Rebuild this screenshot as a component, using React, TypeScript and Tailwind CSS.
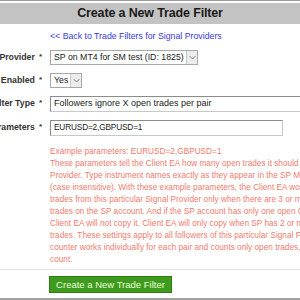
const helpLines = [
  "Example parameters: EURUSD=2,GBPUSD=1",
  "These parameters tell the Client EA how many open trades it should see before copying from the Signal",
  "Provider. Type instrument names exactly as they appear in the SP MetaTrader Market Watch window",
  "(case insensitive). With these example parameters, the Client EA would copy EURUSD",
  "trades from this particular Signal Provider only when there are 3 or more open EURUSD",
  "trades on the SP account. And if the SP account has only one open GBPUSD trade, the",
  "Client EA will not copy it. Client EA will only copy when SP has 2 or more open GBPUSD",
  "trades. These settings apply to all followers of this particular Signal Provider. The",
  "counter works individually for each pair and counts only open trades, pending orders don't",
  "count.",
];

const Label = ({ text }: { text: string }) => (
  <div className="w-[100px] shrink-0 text-right whitespace-nowrap text-[8.75px] font-bold text-[#333]">
    {text}
    <span className="ml-[4px] text-[8px] align-[1px]">*</span>
  </div>
);

const Chevron = () => (
  <span className="flex h-full w-[11px] items-center justify-center border-l border-[#c8c8c8] bg-[#ececec]">
    <svg width="7" height="5" viewBox="0 0 7 5" fill="none">
      <path d="M0.5 1 L3.5 4 L6.5 1" stroke="#888" strokeWidth="1" />
    </svg>
  </span>
);

export default function App() {
  return (
    <div className="relative flex h-[300px] w-[300px] flex-col overflow-hidden bg-white font-['Liberation_Sans',Arial,sans-serif] text-[#222]">
      <div className="h-px shrink-0 bg-[#9a9a9a]" />
      <div className="mt-[2px] flex h-[21px] shrink-0 items-center justify-center bg-[#c3c3c3] text-[12.5px] font-bold tracking-[-0.15px] text-[#1a1a1a]">
        Create a New Trade Filter
      </div>

      <div className="ml-[-58px] w-[420px] shrink-0">
        <div className="ml-[108px] mt-[5px] h-[14px] text-[8.75px] leading-[14px] text-[#3b3bd6]">
          &lt;&lt; Back to Trade Filters for Signal Providers
        </div>

        <div className="mt-[7px] flex flex-col gap-[8px]">
          <div className="flex h-[15px] items-center gap-[8px]">
            <Label text="Provider" />
            <div className="flex h-[15px] w-[148px] items-center border border-[#a8a8a8] bg-white">
              <span className="flex-1 whitespace-nowrap pl-[3px] text-[8.75px] leading-none">SP on MT4 for SM test (ID: 1825)</span>
              <Chevron />
            </div>
          </div>

          <div className="flex h-[15px] items-center gap-[8px]">
            <Label text="Enabled" />
            <div className="flex h-[15px] w-[32px] items-center border border-[#a8a8a8] bg-white">
              <span className="flex-1 pl-[3px] text-[8.75px] leading-none">Yes</span>
              <Chevron />
            </div>
          </div>

          <div className="flex h-[16px] items-center gap-[8px]">
            <Label text="Filter Type" />
            <div className="flex h-[16px] w-[300px] items-center border border-[#8c8c8c] border-b-[#c8c8c8] border-r-[#c8c8c8] bg-white pl-[3px] text-[9px] whitespace-nowrap">
              Followers ignore X open trades per pair
            </div>
          </div>

          <div className="flex h-[16px] items-center gap-[8px]">
            <Label text="Parameters" />
            <div className="flex h-[16px] w-[233px] items-center border border-[#8c8c8c] border-b-[#c8c8c8] border-r-[#c8c8c8] bg-white pl-[3px] text-[8.25px] tracking-[-0.15px] whitespace-nowrap">
              EURUSD=2,GBPUSD=1
            </div>
          </div>
        </div>

        <div className="ml-[108px] mt-[10px] text-[8.25px] leading-[12px] text-[#f07b70]">
          {helpLines.map((line) => (
            <div key={line} className="h-[12px] whitespace-nowrap">
              {line}
            </div>
          ))}
        </div>
      </div>

      <div className="mt-[3px] h-px shrink-0 bg-[#e2e2e2]" />

      <div className="mt-[6px] shrink-0 pl-[49px]">
        <button className="block h-[17px] w-[123px] border border-[#2f7d12] bg-[#3f9b1e] text-[9.5px] leading-none text-[#e8ffd8]">
          Create a New Trade Filter
        </button>
      </div>

      <div className="absolute bottom-0 left-0 right-0 h-[2px] bg-[#a0a0a0]" />
    </div>
  );
}
